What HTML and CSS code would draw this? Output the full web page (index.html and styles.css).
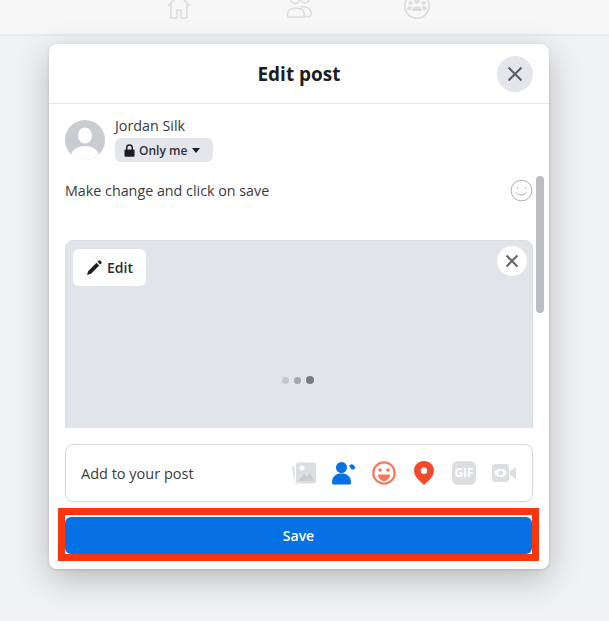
FILE: index.html
```html
<!DOCTYPE html>
<html lang="en">
<head>
<meta charset="utf-8">
<title>Edit post</title>
<link rel="stylesheet" href="styles.css">
</head>
<body>
<header class="topbar">
  <svg class="nav-icon nav-home" viewBox="0 0 26 26"><path d="M2 12 13 1l11 11M5 10v14h6v-8h4v8h6V10" /></svg>
  <svg class="nav-icon nav-friends" viewBox="0 0 26 26"><circle cx="9" cy="5" r="4.500"/><circle cx="19" cy="5" r="4"/><path d="M2 23c-2-6 3-9 8-9 6 0 9 3 8 9z"/><path d="M15 13c6-1 11 2 10 8-.2 2-2 2-7 2"/></svg>
  <svg class="nav-icon nav-groups" viewBox="0 0 26 26"><circle cx="13" cy="11" r="12.200"/><g class="nav-fill"><circle cx="13" cy="6" r="2.600"/><circle cx="6.500" cy="8" r="2"/><circle cx="19.500" cy="8" r="2"/><path d="M8 16c0-6 10-6 10 0z"/><path d="M3 15c0-4 4-5 5-3l-1 3zM23 15c0-4-4-5-5-3l1 3z"/></g></svg>
</header>

<main class="modal">
  <div class="modal-head">
    <h1 class="modal-title">Edit post</h1>
    <button class="close-btn" aria-label="Close">
      <svg viewBox="0 0 20 20" class="close-icon"><path d="M3.500 3.500 16.500 16.500M16.500 3.500 3.500 16.500"/></svg>
    </button>
  </div>

  <div class="modal-scroll">
    <div class="author">
      <svg class="avatar" viewBox="0 0 40 40">
        <defs><clipPath id="av"><circle cx="20" cy="20" r="20"/></clipPath></defs>
        <circle cx="20" cy="20" r="20" fill="#c9ccd1"/>
        <g clip-path="url(#av)" fill="#fff">
          <ellipse cx="20" cy="15.500" rx="7" ry="8"/>
          <ellipse cx="20" cy="36" rx="14" ry="10"/>
        </g>
      </svg>
      <div class="author-info">
        <div class="author-name">Jordan Silk</div>
        <div class="privacy">
          <svg class="lock" viewBox="0 0 12 14"><path d="M1.500 6h9A1.200 1.200 0 0 1 11.500 7.200v5.300A1.300 1.300 0 0 1 10.200 13.800H1.800A1.300 1.300 0 0 1 .5 12.500V7.200A1.200 1.200 0 0 1 1.500 6z"/><path class="lock-arc" d="M3 6.500V4a3 3 0 0 1 6 0v2.500"/></svg>
          <span>Only me</span>
          <span class="caret"></span>
        </div>
      </div>
    </div>

    <div class="post-text">
      <span>Make change and click on save</span>
      <svg class="smile" viewBox="0 0 24 24"><circle cx="12" cy="12" r="10.800"/><circle class="dot" cx="8" cy="9.500" r=".8"/><circle class="dot" cx="16" cy="9.500" r=".8"/><path d="M6.500 14c2.500 3.500 8.500 3.500 11 0"/></svg>
    </div>

    <div class="media">
      <div class="media-top">
        <button class="edit-btn">
          <svg class="pencil" viewBox="0 0 16 16"><path d="M10.500 2.800 13.200 5.500 5 13.700 1 15l1.300-4zM11.500 1.800 12.600.8a1.200 1.200 0 0 1 1.700 0l1 1a1.200 1.200 0 0 1 0 1.700l-1.100 1z"/></svg>
          <span>Edit</span>
        </button>
        <button class="media-close" aria-label="Remove">
          <svg viewBox="0 0 20 20" class="media-x"><path d="M4 4 16 16M16 4 4 16"/></svg>
        </button>
      </div>
      <div class="dots"><i class="d1"></i><i class="d2"></i><i class="d3"></i></div>
    </div>

    <div class="scrollbar"></div>
  </div>

  <div class="add-box">
    <span class="add-label">Add to your post</span>
    <div class="add-icons">
      <svg class="add-icon" viewBox="0 0 24 24"><path fill="#dcdee1" d="M0 5.500h2.500v18H5v-1H2.500z"/><rect x="4" y="1.500" width="20" height="21" rx="2" fill="#dcdee1"/><circle cx="10" cy="7" r="2.500" fill="#fff"/><path d="m6 20 6-7 3 3 3-4 4 8z" fill="#c9ccd1"/></svg>
      <svg class="add-icon" viewBox="0 0 24 24"><circle cx="9.500" cy="6.500" r="5.500" fill="#0571e4"/><path d="M0 22c0-7 4-9.500 9.500-9.500S19 15 19 22c0 1-1 1.500-2 1.500H2c-1 0-2-.5-2-1.500z" fill="#0571e4"/><path d="M17 4.500l3-1.500 3.500 3-1.500 2.500h-2.500z" fill="#0571e4"/></svg>
      <svg class="add-icon" viewBox="0 0 24 24"><circle cx="12" cy="12" r="10.700" fill="none" stroke="#f7785a" stroke-width="2.200"/><circle cx="8" cy="9" r="1.800" fill="#f7785a"/><circle cx="16" cy="9" r="1.800" fill="#f7785a"/><path d="M6 13.500h12c0 4-3 6.500-6 6.500s-6-2.500-6-6.500z" fill="#f7785a"/></svg>
      <svg class="add-icon" viewBox="0 0 24 24"><path fill-rule="evenodd" d="M12 0c5.500 0 10 4 10 9.500 0 5.500-5 10-10 14.500C7 19.500 2 15 2 9.500 2 4 6.500 0 12 0zm0 6.500a3.200 3.200 0 1 0 0 6.400 3.200 3.200 0 0 0 0-6.400z" fill="#f4492a"/></svg>
      <div class="gif">GIF</div>
      <svg class="add-icon" viewBox="0 0 24 24"><rect x="0" y="3" width="17" height="18" rx="3.500" fill="#dcdee1"/><path d="M18 10l6-4v12l-6-4z" fill="#dcdee1"/><ellipse cx="8.500" cy="12" rx="6" ry="4" fill="#fff"/><circle cx="8.500" cy="12" r="2.500" fill="#dcdee1"/></svg>
    </div>
  </div>

  <div class="save-frame">
    <button class="save-btn">Save</button>
  </div>
</main>
</body>
</html>
```

FILE: styles.css
```css
* { box-sizing: border-box; }
html, body { margin: 0; height: 100%; }
body {
  width: 609px;
  height: 621px;
  overflow: hidden;
  background: #f1f2f4;
  font-family: "Open Sans", "Liberation Sans", sans-serif;
  color: #1c1e21;
}
button { font-family: inherit; border: 0; padding: 0; cursor: pointer; }

.topbar {
  height: 34px;
  background: #f7f7f8;
  box-shadow: 0 1px 3px rgba(0,0,0,.06);
  display: flex;
  align-items: flex-start;
  position: relative;
  padding-left: 166px;
  overflow: hidden;
}
.nav-icon { fill: none; stroke: #dcdddf; stroke-width: 1.600; flex: none; width: 26px; height: 26px; }
.nav-home { margin-top: -6px; }
.nav-friends { margin-left: 94px; margin-top: -6px; }
.nav-groups { margin-left: 92px; margin-top: -5px; }
.nav-fill { fill: #dcdddf; stroke: none; }

.modal {
  position: relative;
  width: 500px;
  height: 525px;
  margin: 10px 0 0 49px;
  background: #fff;
  border-radius: 8px;
  box-shadow: 0 10px 34px rgba(0,0,0,.24), 0 1px 3px rgba(0,0,0,.12);
  overflow: hidden;
}
.modal-head {
  height: 60px;
  border-bottom: 1px solid #e4e6e9;
  display: flex;
  align-items: center;
  justify-content: center;
  position: relative;
}
.modal-title { margin: 0; font-size: 19px; font-weight: 700; line-height: 24px; color: #1c1e21; }
.close-btn {
  position: absolute;
  right: 16px;
  top: 12px;
  width: 36px;
  height: 36px;
  border-radius: 50%;
  background: #e4e6eb;
  display: flex;
  align-items: center;
  justify-content: center;
}
.close-icon { width: 20px; height: 20px; fill: none; stroke: #5b5e63; stroke-width: 2; }

.modal-scroll { height: 324px; padding: 16px 16px 0; position: relative; overflow: hidden; }
.author { display: flex; gap: 10px; align-items: flex-start; }
.avatar { width: 40px; height: 40px; flex: none; }
.author-info { display: flex; flex-direction: column; margin-top: -4px; }
.author-name { font-size: 14.3px; line-height: 19px; color: #3a3b3e; }
.privacy {
  margin-top: 3px;
  width: 98px;
  height: 24px;
  background: #e4e6eb;
  border-radius: 6px;
  display: flex;
  align-items: center;
  padding-left: 9px;
  font-size: 12px;
  font-weight: 600;
  color: #2b3238;
}
.lock { width: 11px; height: 13px; flex: none; margin-right: 4px; fill: #1c1e21; }
.lock-arc { fill: none; stroke: #1c1e21; stroke-width: 1.600; }
.caret {
  margin-left: 5px;
  border-left: 4.500px solid transparent;
  border-right: 4.500px solid transparent;
  border-top: 5px solid #1c1e21;
}
.post-text {
  margin-top: 15px;
  height: 27px;
  display: flex;
  align-items: center;
  justify-content: space-between;
  font-size: 14.300px;
  color: #3a3b3e;
}
.smile { width: 23px; height: 23px; fill: none; stroke: #a9abaf; stroke-width: 1; flex: none; }
.smile .dot { fill: #a9abaf; stroke: none; }

.media {
  margin-top: 36px;
  width: 468px;
  height: 210px;
  background: #e1e4e9;
  border: 1px solid #dadde1;
  border-radius: 8px 8px 0 0;
  padding: 8px 5px 0 7px;
}
.media-top { display: flex; justify-content: space-between; align-items: flex-start; }
.edit-btn {
  width: 73px;
  height: 37px;
  background: #fff;
  border-radius: 6px;
  display: flex;
  align-items: center;
  justify-content: center;
  gap: 5px;
  font-size: 14px;
  font-weight: 600;
  color: #2b2c2e;
}
.pencil { width: 16px; height: 16px; fill: #1c1e21; }
.media-close {
  width: 30px;
  height: 30px;
  border-radius: 50%;
  background: #fff;
  display: flex;
  align-items: center;
  justify-content: center;
  margin-top: -3px;
}
.media-x { width: 18px; height: 18px; fill: none; stroke: #65676b; stroke-width: 2.400; }
.dots { display: flex; justify-content: center; align-items: center; gap: 4px; margin-top: 90px; padding-right: 4px; }
.dots i { display: block; border-radius: 50%; width: 7px; height: 7px; }
.d1 { background: #c5c7cb; }
.d2 { background: #a4a6ab; margin-left: 1px; }
.d3 { background: #797b80; margin-left: 1px; width: 8px !important; height: 8px !important; }

.scrollbar {
  position: absolute;
  left: 487px;
  top: 72px;
  width: 8px;
  height: 137px;
  background: #bcbec3;
  border-radius: 4px;
}

.add-box {
  width: 468px;
  height: 58px;
  margin: 16px 0 0 16px;
  border: 1px solid #d8dadd;
  border-radius: 8px;
  display: flex;
  align-items: center;
  justify-content: space-between;
  padding: 0 16px 0 15px;
  box-shadow: 0 1px 2px rgba(0,0,0,.05);
}
.add-label { font-size: 14.500px; font-weight: 500; color: #3a3b3e; }
.add-icons { display: flex; align-items: center; gap: 16px; }
.add-icon { width: 24px; height: 24px; flex: none; }
.gif {
  width: 24px;
  height: 24px;
  border-radius: 6px;
  background: #dcdee1;
  color: #fff;
  font-size: 12px;
  font-weight: 700;
  line-height: 24px;
  text-align: center;
}

.save-frame {
  width: 481px;
  height: 53px;
  margin: 6px 0 0 9px;
  border: 7px solid #fb350e;
  padding: 2px 0 0;
  background: #fff;
}
.save-btn {
  display: block;
  width: 467px;
  height: 37px;
  background: #0571e4;
  border-radius: 6px;
  color: #fff;
  font-size: 14px;
  font-weight: 600;
}
```
